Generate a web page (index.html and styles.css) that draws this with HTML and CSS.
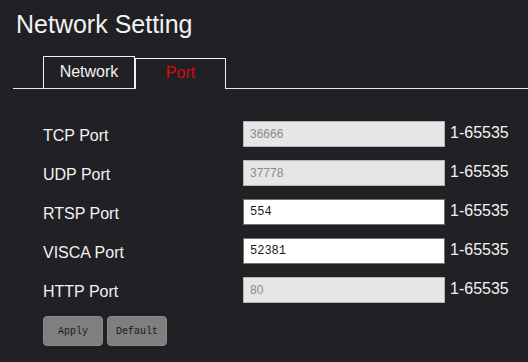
FILE: index.html
```html
<!DOCTYPE html>
<html lang="en">
<head>
    <meta charset="UTF-8">
    <meta name="viewport" content="width=device-width, initial-scale=1.0">
    <title>Network Setting</title>
    <link rel="stylesheet" href="styles.css">
</head>
<body>
    <h1>Network Setting</h1>

    <div class="tabs">
        <div class="tab">Network</div>
        <div class="tab active">Port</div>
    </div>

    <form class="port-form">
        <div class="form-row">
            <label for="tcpPort">TCP Port</label>
            <input type="text" id="tcpPort" value="36666" disabled>
            <span class="range">1-65535</span>
        </div>
        <div class="form-row">
            <label for="udpPort">UDP Port</label>
            <input type="text" id="udpPort" value="37778" disabled>
            <span class="range">1-65535</span>
        </div>
        <div class="form-row">
            <label for="rtspPort">RTSP Port</label>
            <input type="text" id="rtspPort" value="554">
            <span class="range">1-65535</span>
        </div>
        <div class="form-row">
            <label for="viscaPort">VISCA Port</label>
            <input type="text" id="viscaPort" value="52381">
            <span class="range">1-65535</span>
        </div>
        <div class="form-row">
            <label for="httpPort">HTTP Port</label>
            <input type="text" id="httpPort" value="80" disabled>
            <span class="range">1-65535</span>
        </div>

        <div class="actions">
            <button type="button">Apply</button>
            <button type="button">Default</button>
        </div>
    </form>
</body>
</html>
```

FILE: styles.css
```css
* {
    margin: 0;
    padding: 0;
    box-sizing: border-box;
}

body {
    font-family: 'Liberation Sans', Arial, sans-serif;
    color: #f2f2f2;
    background: #212024;
    min-height: 100vh;
}

h1 {
    font-size: 25px;
    font-weight: normal;
    line-height: 30px;
    padding: 9px 0 0 16px;
    margin-bottom: 17px;
}

/* tab strip */
.tabs {
    display: flex;
    align-items: flex-end;
    margin-left: 13px;
    padding-left: 30px;
    border-bottom: 1px solid #e6e6e6;
}

.tab {
    width: 92px;
    height: 32px;
    border: 1px solid #f0f0f0;
    border-bottom: none;
    font-size: 16px;
    line-height: 30px;
    text-align: center;
    color: #f2f2f2;
}

.tab.active {
    width: 91px;
    height: 31px;
    margin-bottom: -1px;
    line-height: 27px;
    color: #d40a0a;
    background: #212024;
}

/* port rows */
.port-form {
    padding: 32px 0 0 43px;
}

.form-row {
    display: flex;
    align-items: flex-start;
    height: 26px;
    margin-bottom: 13px;
}

label {
    width: 200px;
    font-size: 16px;
    line-height: 20px;
    padding-top: 5px;
}

input {
    width: 202px;
    height: 26px;
    padding: 0 6px;
    border: 1px solid #727272;
    background: #fff;
    color: #1a1a1a;
    font-family: 'Liberation Mono', monospace;
    font-size: 12px;
}

input:disabled {
    border-color: #b5b5b5;
    background: #e6e6e6;
    color: #8a8a8a;
    font-family: 'Liberation Sans', Arial, sans-serif;
    font-size: 12px;
}

.range {
    margin-left: 5px;
    font-size: 16px;
    line-height: 20px;
    padding-top: 2px;
}

.actions {
    display: flex;
    gap: 4px;
}

button {
    width: 60px;
    height: 30px;
    border: 1px solid #8a8a8a;
    border-radius: 4px;
    background: #7f7f7f;
    color: #1a1a1a;
    font-family: 'Liberation Mono', monospace;
    font-size: 10px;
    cursor: pointer;
}
```
